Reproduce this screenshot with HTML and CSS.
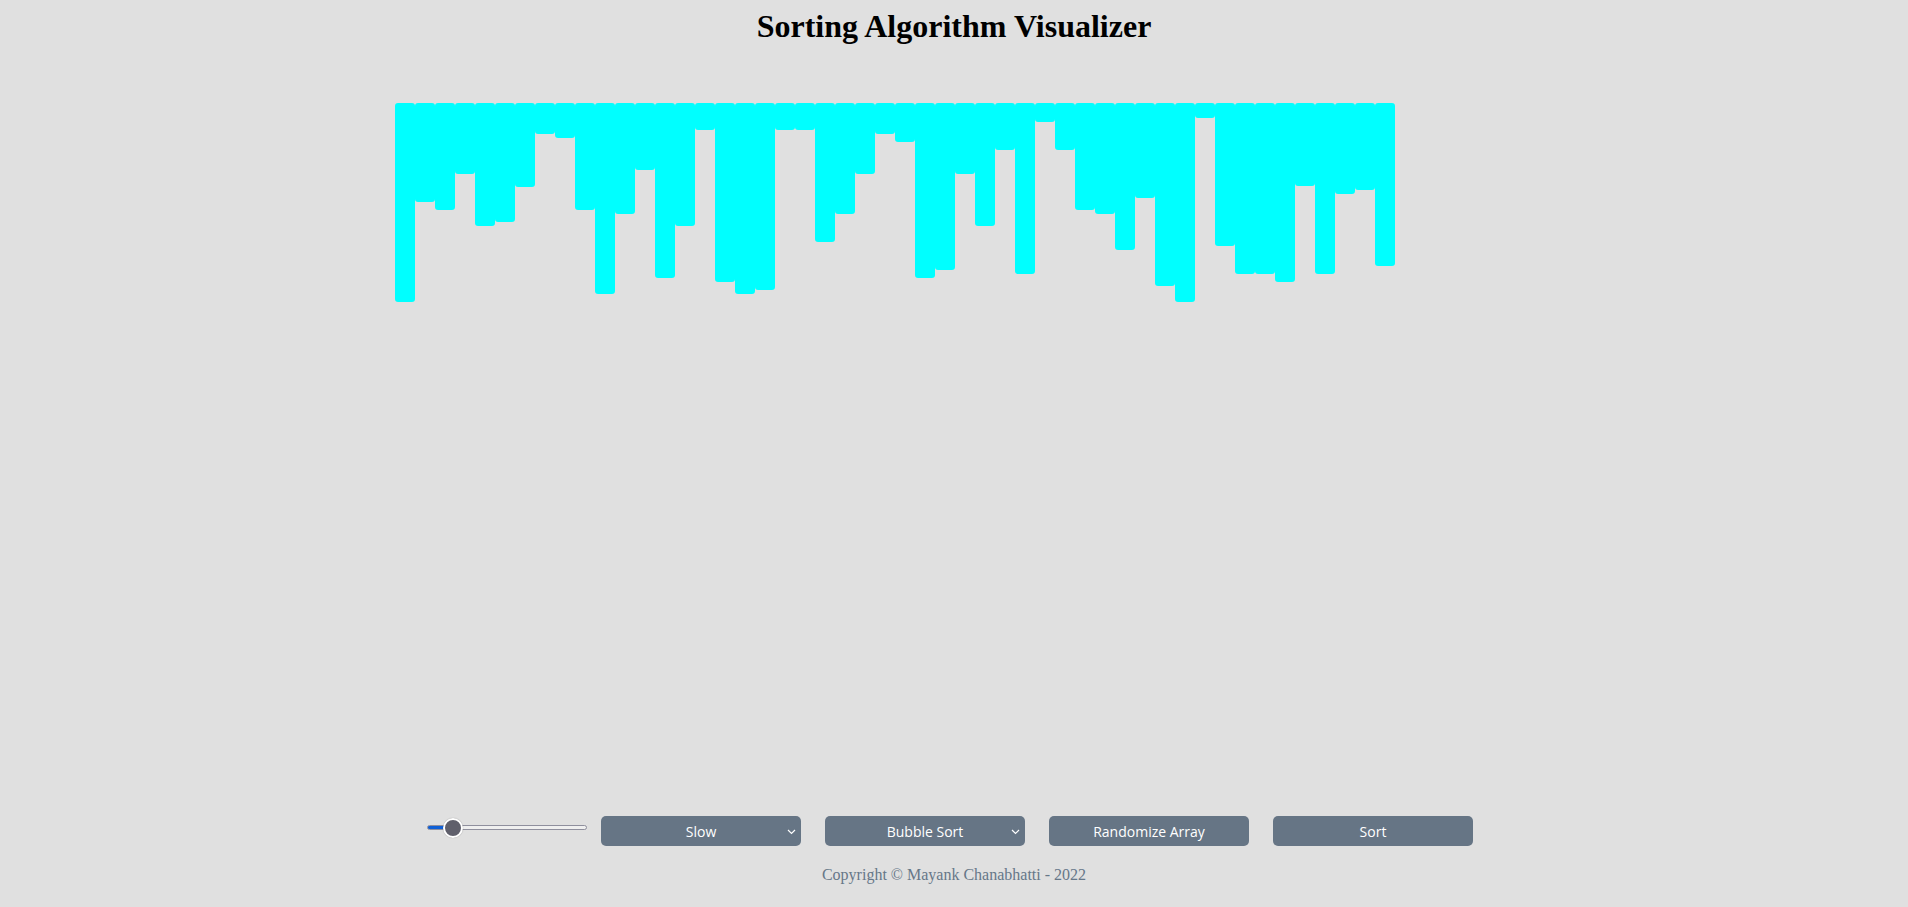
FILE: index.html
```html
<!DOCTYPE html>
<html lang="en">
<head>
<meta charset="utf-8">
<title>Sorting Algorithm Visualizer</title>
<link rel="stylesheet" href="styles.css">
</head>
<body>
<h1 class="title">Sorting Algorithm Visualizer</h1>
<main class="stage">
  <div class="bars">
    <div class="bar" style="height:199px"></div>
    <div class="bar" style="height:99px"></div>
    <div class="bar" style="height:107px"></div>
    <div class="bar" style="height:71px"></div>
    <div class="bar" style="height:123px"></div>
    <div class="bar" style="height:119px"></div>
    <div class="bar" style="height:84px"></div>
    <div class="bar" style="height:31px"></div>
    <div class="bar" style="height:35px"></div>
    <div class="bar" style="height:107px"></div>
    <div class="bar" style="height:191px"></div>
    <div class="bar" style="height:111px"></div>
    <div class="bar" style="height:67px"></div>
    <div class="bar" style="height:175px"></div>
    <div class="bar" style="height:123px"></div>
    <div class="bar" style="height:27px"></div>
    <div class="bar" style="height:179px"></div>
    <div class="bar" style="height:191px"></div>
    <div class="bar" style="height:187px"></div>
    <div class="bar" style="height:27px"></div>
    <div class="bar" style="height:27px"></div>
    <div class="bar" style="height:139px"></div>
    <div class="bar" style="height:111px"></div>
    <div class="bar" style="height:71px"></div>
    <div class="bar" style="height:31px"></div>
    <div class="bar" style="height:39px"></div>
    <div class="bar" style="height:175px"></div>
    <div class="bar" style="height:167px"></div>
    <div class="bar" style="height:71px"></div>
    <div class="bar" style="height:123px"></div>
    <div class="bar" style="height:47px"></div>
    <div class="bar" style="height:171px"></div>
    <div class="bar" style="height:19px"></div>
    <div class="bar" style="height:47px"></div>
    <div class="bar" style="height:107px"></div>
    <div class="bar" style="height:111px"></div>
    <div class="bar" style="height:147px"></div>
    <div class="bar" style="height:95px"></div>
    <div class="bar" style="height:183px"></div>
    <div class="bar" style="height:199px"></div>
    <div class="bar" style="height:15px"></div>
    <div class="bar" style="height:143px"></div>
    <div class="bar" style="height:171px"></div>
    <div class="bar" style="height:171px"></div>
    <div class="bar" style="height:179px"></div>
    <div class="bar" style="height:83px"></div>
    <div class="bar" style="height:171px"></div>
    <div class="bar" style="height:91px"></div>
    <div class="bar" style="height:87px"></div>
    <div class="bar" style="height:163px"></div>
  </div>
</main>
<div class="controls">
  <input class="speed-range" type="range" min="0" max="100" value="11" aria-label="Array size">
  <div class="select-wrap">
    <select class="ctrl">
      <option>Slow</option>
      <option>Medium</option>
      <option>Fast</option>
    </select>
    <svg class="chev" width="9" height="6" viewBox="0 0 9 6"><path d="M1 1 L4.5 4.5 L8 1" fill="none" stroke="#ffffff" stroke-width="1.2"/></svg>
  </div>
  <div class="select-wrap">
    <select class="ctrl">
      <option>Bubble Sort</option>
      <option>Selection Sort</option>
      <option>Insertion Sort</option>
      <option>Merge Sort</option>
      <option>Quick Sort</option>
    </select>
    <svg class="chev" width="9" height="6" viewBox="0 0 9 6"><path d="M1 1 L4.5 4.5 L8 1" fill="none" stroke="#ffffff" stroke-width="1.2"/></svg>
  </div>
  <button class="ctrl">Randomize Array</button>
  <button class="ctrl">Sort</button>
</div>
<footer class="footer">Copyright © Mayank Chanabhatti - 2022</footer>
</body>
</html>
```
FILE: styles.css
```css
html, body {
  height: 100%;
}
body {
  margin: 8px;
  height: calc(100% - 16px);
  background: #e0e0e0;
  display: flex;
  flex-direction: column;
  font-family: "Liberation Serif", "Times New Roman", serif;
}
.title {
  margin: 0;
  text-align: center;
  font-size: 32px;
  font-weight: bold;
  color: #000;
}
.stage {
  flex: 1;
  margin-top: 58px;
}
.bars {
  display: flex;
  align-items: flex-start;
  padding-left: 387px;
}
.bar {
  width: 20px;
  background: #00ffff;
  border-radius: 3px;
  flex: none;
}
.controls {
  display: flex;
  align-items: center;
  justify-content: center;
  gap: 24px;
  padding-right: 8px;
}
.speed-range {
  -webkit-appearance: none;
  appearance: none;
  width: 160px;
  height: 20px;
  margin: 0 -10px 8px 0;
  background: transparent;
}
.speed-range::-webkit-slider-runnable-track {
  height: 5px;
  border: 1px solid #8f8f9d;
  border-radius: 4px;
  background: linear-gradient(to right, #1060d6 0, #1060d6 17%, #efefef 17%);
}
.speed-range::-webkit-slider-thumb {
  -webkit-appearance: none;
  appearance: none;
  width: 20px;
  height: 20px;
  box-sizing: border-box;
  border-radius: 50%;
  background: #5f5f6b;
  border: 2px solid #ffffff;
  box-shadow: 0 0 1px rgba(0,0,0,0.4);
  margin-top: -8px;
}
.select-wrap {
  position: relative;
  width: 200px;
  height: 30px;
}
.ctrl {
  width: 200px;
  height: 30px;
  border: none;
  border-radius: 5px;
  background: #667585;
  color: #ffffff;
  font-family: "Open Sans", "Noto Sans", sans-serif;
  font-size: 14px;
  text-align: center;
  text-align-last: center;
  padding: 0;
  margin: 0;
  -webkit-appearance: none;
  appearance: none;
}
.chev {
  position: absolute;
  right: 5px;
  top: 13px;
  pointer-events: none;
}
.footer {
  margin-top: 20px;
  padding-bottom: 15px;
  text-align: center;
  font-size: 16px;
  color: #667788;
}
```
